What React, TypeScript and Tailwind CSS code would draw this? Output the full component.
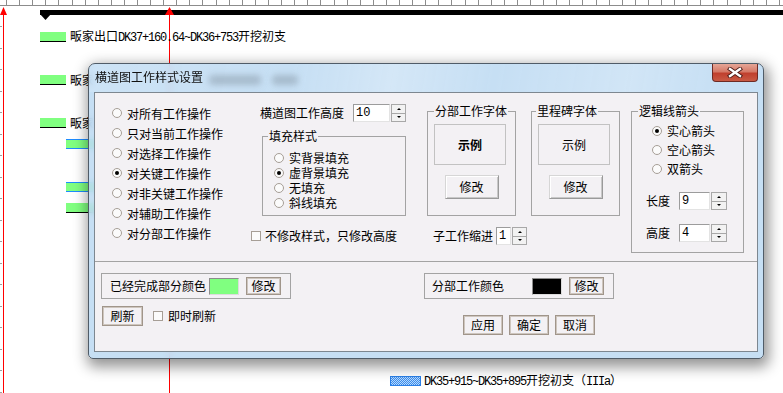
import React from "react";

function Mixed({ text }: { text: string }) {
  const parts = text.split(/([\x20-\x7E]+)/).filter((p) => p.length > 0);
  return (
    <>
      {parts.map((p, i) =>
        /^[\x20-\x7E]+$/.test(p) ? (
          <span key={i} className="font-['Liberation_Mono',monospace] tracking-[-1.2px]">
            {p}
          </span>
        ) : (
          <span key={i}>{p}</span>
        )
      )}
    </>
  );
}

function Radio({ label, checked = false }: { label: string; checked?: boolean }) {
  return (
    <div className="flex items-center h-full">
      <span className="w-[10px] h-[10px] rounded-full border border-[#a69e96] bg-[#fbfbfb] flex items-center justify-center shrink-0">
        {checked && <span className="w-[4px] h-[4px] rounded-full bg-black" />}
      </span>
      <span className="ml-[5px] block h-[13px] leading-[13px] whitespace-nowrap">{label}</span>
    </div>
  );
}

function Check() {
  return <span className="w-[10px] h-[10px] border border-[#a69e96] bg-[#fbfbfb] shrink-0" />;
}

function Spinner({ w, h }: { w: number; h: number }) {
  const half = "flex-1 flex items-center justify-center border border-[#a8a8a8] bg-[#f2f2f2]";
  return (
    <div className="flex flex-col" style={{ width: w, height: h }}>
      <div className={half + " border-b-0"}>
        <span className="w-0 h-0 border-x-[2px] border-x-transparent border-b-[2px] border-b-black" />
      </div>
      <div className={half}>
        <span className="w-0 h-0 border-x-[2px] border-x-transparent border-t-[2px] border-t-black" />
      </div>
    </div>
  );
}

function Input({ value, w, h }: { value: string; w: number; h: number }) {
  return (
    <div
      className="bg-white border border-[#9c9c9c] border-b-[#e3e3e3] border-r-[#e3e3e3] flex items-center pl-[2px] font-['Liberation_Mono',monospace] text-[12px]"
      style={{ width: w, height: h }}
    >
      {value}
    </div>
  );
}

function FlatButton({ label, w, h }: { label: string; w: number; h: number }) {
  return (
    <div
      className="border border-[#a0958a] shadow-[inset_0_0_0_1px_#cec6be] bg-[#f3f1f4] flex items-center justify-center text-[12px] leading-[14px]"
      style={{ width: w, height: h }}
    >
      {label}
    </div>
  );
}

function Legend({ label, ml }: { label: string; ml: string }) {
  return <legend className={"px-[1px] leading-[14px] " + ml}>{label}</legend>;
}

export default function App() {
  const ticks: number[] = [];
  for (let x = 6; x < 783; x += 13.1) ticks.push(Math.round(x) + 0.5);
  const leftTicks: number[] = [];
  for (let y = 26; y < 393; y += 21.5) leftTicks.push(Math.round(y) + 0.5);

  return (
    <div className="relative w-[783px] h-[393px] overflow-hidden bg-white font-['Noto_Sans_CJK_SC',sans-serif] text-[12px] leading-[14px] text-black">
      <svg className="absolute left-0 top-0" width={783} height={393}>
        <line x1={0} y1={5.5} x2={783} y2={5.5} stroke="#8c8c8c" />
        {ticks.map((x) => (
          <line key={x} x1={x} y1={0} x2={x} y2={5} stroke="#8c8c8c" />
        ))}
        {leftTicks.map((y) => (
          <line key={y} x1={0} y1={y} x2={2} y2={y} stroke="#a0a0a0" />
        ))}
        <rect x={40} y={10} width={743} height={5} fill="#000" />
        <polygon points="40,14 51,14 45.5,20" fill="#000" />
        <line x1={3.5} y1={12} x2={3.5} y2={393} stroke="#ff0000" />
        <polygon points="0,15 7,15 3.5,7" fill="#ff0000" />
        <line x1={169.5} y1={12} x2={169.5} y2={393} stroke="#ff0000" />
        <polygon points="165,15 174,15 169.5,7" fill="#ff0000" />
      </svg>

      {/* gantt rows */}
      <div className="absolute left-[40px] top-[30px] h-[14px] flex items-center">
        <span className="w-[26px] h-[10px] bg-[#80ff80] border-b border-black" />
        <span className="ml-[4px] whitespace-nowrap">
          <Mixed text="畈家出口DK37+160.64~DK36+753开挖初支" />
        </span>
      </div>
      <div className="absolute left-[40px] top-[73px] h-[14px] flex items-center">
        <span className="w-[26px] h-[10px] bg-[#80ff80] border-b border-black" />
        <span className="ml-[4px] whitespace-nowrap">畈家</span>
      </div>
      <div className="absolute left-[40px] top-[116px] h-[14px] flex items-center">
        <span className="w-[26px] h-[10px] bg-[#80ff80] border-b border-black" />
        <span className="ml-[4px] whitespace-nowrap">畈家</span>
      </div>
      <div className="absolute left-[66px] top-[139px] w-[160px] h-[10px] bg-[#80ff80] border-y border-[#1e8cff]" />
      <div className="absolute left-[66px] top-[182px] w-[160px] h-[10px] bg-[#80ff80] border-y border-[#1e8cff]" />
      <div className="absolute left-[66px] top-[203px] w-[160px] h-[10px] bg-[#80ff80] border-b border-black" />

      <div className="absolute left-[390px] top-[374px] h-[14px] flex items-center">
        <span className="w-[31px] h-[10px] border border-[#2a7fe6] bg-[repeating-conic-gradient(#3a8ef0_0_25%,#b9d9fb_0_50%)] bg-[length:2px_2px]" />
        <span className="ml-[3px] whitespace-nowrap">
          <Mixed text="DK35+915~DK35+895开挖初支（IIIa）" />
        </span>
      </div>

      {/* dialog window */}
      <div className="absolute left-[88px] top-[63px] w-[676px] h-[296px] rounded-t-[7px] rounded-b-[5px] border border-[#505c68] bg-[#bcd9f2]/85 backdrop-blur-[3px] shadow-[2px_5px_14px_3px_rgba(0,0,0,0.42)] flex flex-col">
        <div className="relative h-[28px] flex items-start pl-[6px] pr-[5px] rounded-t-[6px] bg-[linear-gradient(100deg,rgba(255,255,255,0.12)_0%,rgba(255,255,255,0)_30%,rgba(255,255,255,0.25)_45%,rgba(255,255,255,0)_60%,rgba(255,255,255,0.2)_80%,rgba(255,255,255,0)_95%)]">
          <span className="absolute left-[120px] top-[11px] w-[52px] h-[10px] rounded-[4px] bg-[#7f8e9c]/45 blur-[3px]" />
          <span className="absolute left-[183px] top-[11px] w-[26px] h-[10px] rounded-[4px] bg-[#7f8e9c]/45 blur-[3px]" />
          <span className="relative mt-[6px] leading-[14px] text-[#111] whitespace-nowrap">
            横道图工作样式设置
          </span>
          <div className="relative ml-auto w-[46px] h-[18px] rounded-b-[4px] border border-t-0 border-[#6e2a24] bg-[linear-gradient(180deg,#e5a596_0%,#d57a68_45%,#c0402e_55%,#c85a44_100%)] flex items-center justify-center">
            <svg width="18" height="11" viewBox="0 0 18 11">
              <path d="M4 2 L14 9 M14 2 L4 9" stroke="#4a1a16" strokeWidth="4.2" strokeLinecap="square" />
              <path d="M4 2 L14 9 M14 2 L4 9" stroke="#ffffff" strokeWidth="2.4" strokeLinecap="square" />
            </svg>
          </div>
        </div>

        <div className="mx-[5px] w-[664px] h-[260px] border border-[#7d8790] bg-[#f3f1f4] flex flex-col">
          {/* top section */}
          <div className="h-[169px] border-b border-[#a3a3a3] flex items-start">
            {/* column 1 */}
            <div className="w-[155px] pl-[17px] pt-[10px] flex flex-col">
              {[
                ["对所有工作操作", false],
                ["只对当前工作操作", false],
                ["对选择工作操作", false],
                ["对关键工作操作", true],
                ["对非关键工作操作", false],
                ["对辅助工作操作", false],
                ["对分部工作操作", false],
              ].map(([l, c]) => (
                <div key={l as string} className="h-[20px]">
                  <Radio label={l as string} checked={c as boolean} />
                </div>
              ))}
            </div>

            {/* column 2 */}
            <div className="w-[156px] flex flex-col">
              <div className="mt-[11px] h-[18px] flex items-center">
                <span className="ml-[10px] whitespace-nowrap">横道图工作高度</span>
                <div className="ml-[9px]">
                  <Input value="10" w={37} h={18} />
                </div>
                <div className="ml-[1px]">
                  <Spinner w={15} h={18} />
                </div>
              </div>
              <fieldset className="mt-[7px] ml-[12px] w-[144px] h-[87px] border border-[#a3a3a3]">
                <Legend label="填充样式" ml="ml-[5px]" />
                <div className="pt-[7px] pl-[11px] flex flex-col">
                  <div className="h-[15px]"><Radio label="实背景填充" /></div>
                  <div className="h-[15px]"><Radio label="虚背景填充" checked /></div>
                  <div className="h-[15px]"><Radio label="无填充" /></div>
                  <div className="h-[15px]"><Radio label="斜线填充" /></div>
                </div>
              </fieldset>
              <div className="mt-[13px] h-[14px] flex items-center">
                <span className="ml-[1px] flex"><Check /></span>
                <span className="ml-[4px] whitespace-nowrap">不修改样式，只修改高度</span>
              </div>
            </div>

            {/* column 3 */}
            <div className="ml-[21px] flex flex-col">
              <div className="mt-[11px] flex gap-[15px]">
                <fieldset className="w-[89px] h-[112px] border border-[#a3a3a3]">
                  <Legend label="分部工作字体" ml="ml-[6px]" />
                  <div className="mt-[6px] ml-[6px] w-[72px] h-[41px] border border-[#c2c2c2] flex items-center justify-center font-bold">
                    示例
                  </div>
                  <div className="mt-[10px] mx-auto w-[54px] h-[24px] border border-[#9a9a9a] border-t-[#d6d6d6] border-l-[#d6d6d6] bg-[#f3f1f4] shadow-[inset_1px_1px_0_#ffffff,inset_-1px_-1px_0_#c8c8c8] flex items-center justify-center">
                    修改
                  </div>
                </fieldset>
                <fieldset className="w-[89px] h-[112px] border border-[#a3a3a3]">
                  <Legend label="里程碑字体" ml="ml-[4px]" />
                  <div className="mt-[6px] ml-[6px] w-[72px] h-[41px] border border-[#c2c2c2] flex items-center justify-center">
                    示例
                  </div>
                  <div className="mt-[10px] mx-auto w-[54px] h-[24px] border border-[#9a9a9a] border-t-[#d6d6d6] border-l-[#d6d6d6] bg-[#f3f1f4] shadow-[inset_1px_1px_0_#ffffff,inset_-1px_-1px_0_#c8c8c8] flex items-center justify-center">
                    修改
                  </div>
                </fieldset>
              </div>
              <div className="mt-[11px] ml-[6px] h-[18px] flex items-center">
                <span className="whitespace-nowrap">子工作缩进</span>
                <div className="ml-[3px]">
                  <Input value="1" w={15} h={18} />
                </div>
                <div className="ml-[1px]">
                  <Spinner w={15} h={18} />
                </div>
              </div>
            </div>

            {/* column 4 */}
            <fieldset className="ml-[11px] mt-[11px] w-[113px] h-[149px] border border-[#a3a3a3]">
              <Legend label="逻辑线箭头" ml="ml-[6px]" />
              <div className="mt-[3px] pl-[20px] flex flex-col">
                <div className="h-[19px]"><Radio label="实心箭头" checked /></div>
                <div className="h-[19px]"><Radio label="空心箭头" /></div>
                <div className="h-[19px]"><Radio label="双箭头" /></div>
              </div>
              <div className="mt-[14px] pl-[14px] h-[18px] flex items-center">
                <span>长度</span>
                <div className="ml-[9px]">
                  <Input value="9" w={31} h={18} />
                </div>
                <div className="ml-[1px]">
                  <Spinner w={16} h={18} />
                </div>
              </div>
              <div className="mt-[14px] pl-[14px] h-[18px] flex items-center">
                <span>高度</span>
                <div className="ml-[9px]">
                  <Input value="4" w={31} h={18} />
                </div>
                <div className="ml-[1px]">
                  <Spinner w={16} h={18} />
                </div>
              </div>
            </fieldset>
          </div>

          {/* bottom section */}
          <div className="pl-[6px] flex flex-col">
            <div className="mt-[11px] flex">
              <div className="w-[190px] h-[26px] border border-[#a3a3a3] flex items-center pl-[8px]">
                <span className="whitespace-nowrap">已经完成部分颜色</span>
                <span className="ml-[3px] w-[30px] h-[17px] bg-[#80ff80] border border-[#8c8c8c] border-b-[#dcdcdc] border-r-[#dcdcdc]" />
                <div className="ml-[7px]">
                  <FlatButton label="修改" w={35} h={18} />
                </div>
              </div>
              <div className="ml-[133px] w-[190px] h-[26px] border border-[#a3a3a3] flex items-center pl-[7px]">
                <span className="whitespace-nowrap">分部工作颜色</span>
                <span className="ml-[28px] w-[30px] h-[17px] bg-black border border-[#8c8c8c] border-b-[#dcdcdc] border-r-[#dcdcdc]" />
                <div className="ml-[7px]">
                  <FlatButton label="修改" w={35} h={18} />
                </div>
              </div>
            </div>
            <div className="mt-[7px] flex items-start">
              <div className="ml-[1px] w-[361px] h-[20px] flex items-center">
                <FlatButton label="刷新" w={41} h={20} />
                <span className="ml-[10px] flex"><Check /></span>
                <span className="ml-[5px] whitespace-nowrap">即时刷新</span>
              </div>
              <div className="mt-[9px] flex gap-[6px]">
                <FlatButton label="应用" w={40} h={20} />
                <FlatButton label="确定" w={40} h={20} />
                <FlatButton label="取消" w={40} h={20} />
              </div>
            </div>
          </div>
        </div>
      </div>
    </div>
  );
}
